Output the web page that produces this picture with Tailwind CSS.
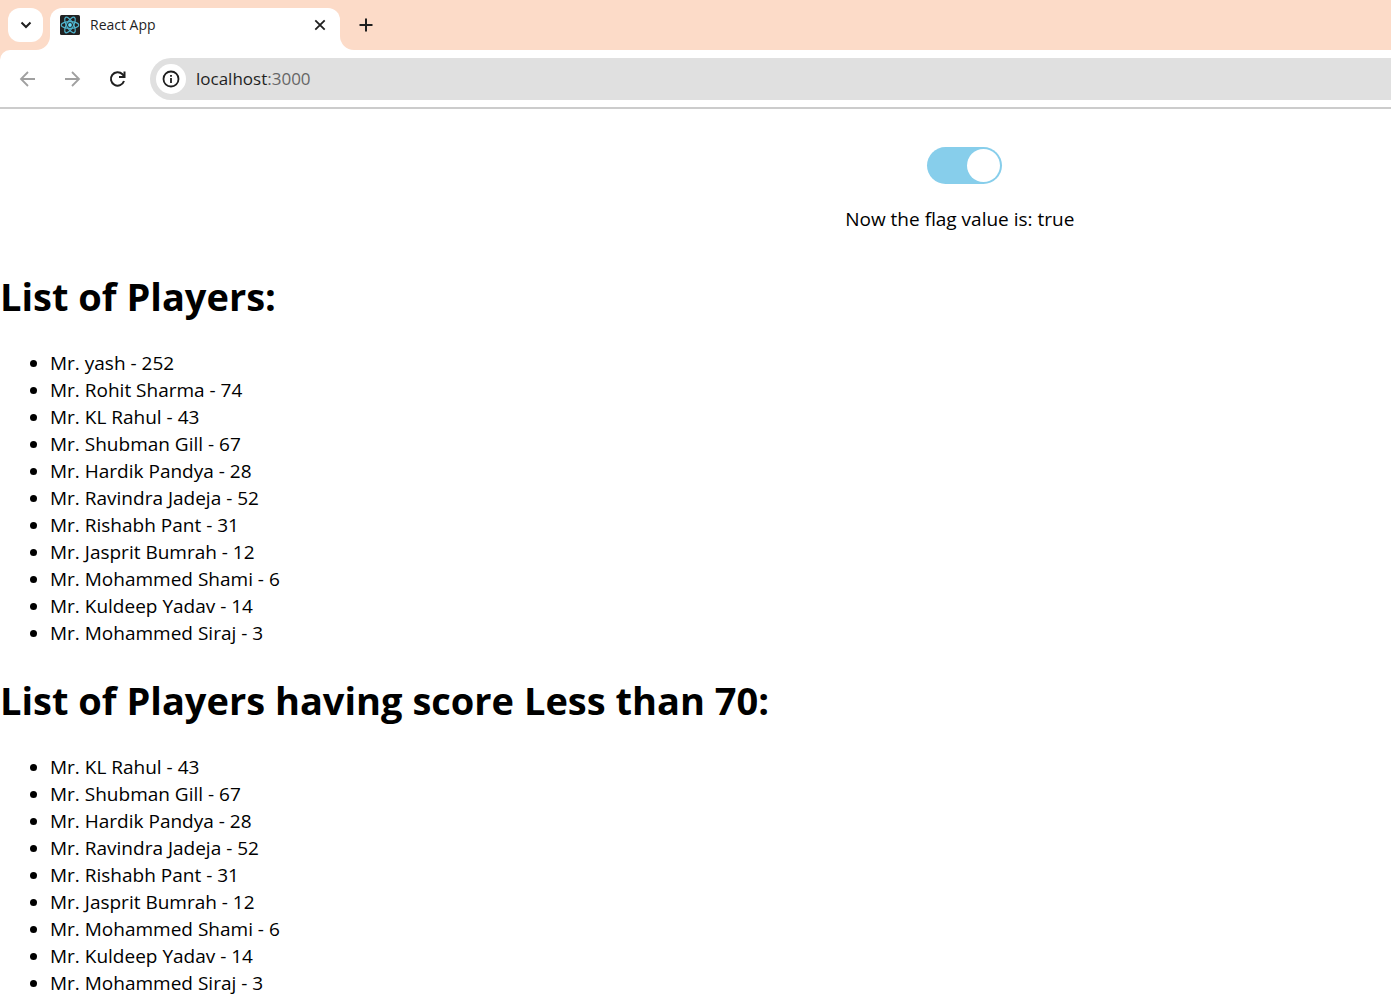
<!DOCTYPE html>
<html lang="en">
<head>
<meta charset="utf-8">
<meta name="viewport" content="width=device-width, initial-scale=1">
<title>React App</title>
<script src="https://cdn.jsdelivr.net/npm/@tailwindcss/browser@4"></script>
</head>
<body class="bg-white text-black font-['Open_Sans','Noto_Sans',sans-serif]">
<header class="border-b-2 border-[#cccccc]">
  <!-- Tab strip -->
  <div class="flex h-[50px] bg-white">
    <div class="w-[50px] shrink-0 rounded-br-[14px] bg-[#fcdbc8] pt-2 pl-2">
      <button type="button" aria-label="Search tabs" class="flex h-[34px] w-[35px] items-center justify-center rounded-xl bg-white">
        <svg class="size-4" viewBox="0 0 16 16" fill="none" stroke="#1f1f1f" stroke-width="2"><path d="M3.500 5.500 8 10l4.500-4.500"/></svg>
      </button>
    </div>
    <div class="w-[290px] shrink-0 bg-[#fcdbc8] pt-2">
      <div class="flex h-[42px] items-center rounded-t-xl bg-white px-[10px] pb-2">
        <svg class="size-5" viewBox="0 0 20 20" fill="none">
          <rect width="20" height="20" rx="1.500" fill="#222222"/>
          <g stroke="#4fb3cc" stroke-width="1.200"><ellipse cx="10" cy="10" rx="8.800" ry="3.400"/><ellipse cx="10" cy="10" rx="8.800" ry="3.400" transform="rotate(60 10 10)"/><ellipse cx="10" cy="10" rx="8.800" ry="3.400" transform="rotate(120 10 10)"/></g>
          <circle cx="10" cy="10" r="1.900" fill="#61dafb"/>
        </svg>
        <span class="ml-[10px] grow text-sm leading-5 text-[#1f1f1f]">React App</span>
        <button type="button" aria-label="Close tab" class="flex size-5 items-center justify-center">
          <svg class="size-5" viewBox="0 0 20 20" fill="none" stroke="#1f1f1f" stroke-width="1.800"><path d="m5.300 5.300 9.400 9.400m0-9.400-9.400 9.400"/></svg>
        </button>
      </div>
    </div>
    <div class="grow rounded-bl-[14px] bg-[#fcdbc8] pt-[15px] pl-4">
      <button type="button" aria-label="New tab" class="flex size-5 items-center justify-center">
        <svg class="size-5" viewBox="0 0 20 20" fill="none" stroke="#1f1f1f" stroke-width="2"><path d="M10 3.500v13M3.500 10h13"/></svg>
      </button>
    </div>
  </div>
  <!-- Toolbar -->
  <div class="bg-[#fcdbc8]">
    <div class="flex h-[57px] items-center rounded-tl-[10px] bg-white pl-[18px]">
      <button type="button" aria-label="Back" class="mr-[25px] size-5">
        <svg class="size-5" viewBox="0 0 20 20" fill="none" stroke="#a0a0a0" stroke-width="1.800"><path d="M17 10H3.500M10 3l-7 7 7 7"/></svg>
      </button>
      <button type="button" aria-label="Forward" class="mr-[25px] size-5">
        <svg class="size-5" viewBox="0 0 20 20" fill="none" stroke="#a0a0a0" stroke-width="1.800"><path d="M2 10h13.500M9 3l7 7-7 7"/></svg>
      </button>
      <button type="button" aria-label="Reload" class="mr-[22px] size-5">
        <svg class="size-5" viewBox="0 0 20 20" fill="none" stroke="#1f1f1f" stroke-width="2"><path d="M16 12A6.700 6.700 0 1 1 14.500 5.300l1.600 1.800"/><path d="M16.500 2.500V8H11"/></svg>
      </button>
      <div class="flex h-[42px] grow items-center rounded-l-full bg-[#e0e0e0] pl-[6px]">
        <button type="button" aria-label="View site information" class="flex size-[30px] items-center justify-center rounded-full bg-white">
          <svg class="size-[18px]" viewBox="0 0 18 18" fill="none" stroke="#1f1f1f" stroke-width="1.800"><circle cx="9" cy="9" r="7.500"/><path d="M9 8v5M9 5v1.800"/></svg>
        </button>
        <a href="http://localhost:3000" class="ml-[10px] text-[17px] leading-6 text-[#1f1f1f]">localhost<span class="text-[#666666]">:3000</span></a>
      </div>
    </div>
  </div>
</header>
<main class="text-[19px] leading-[27px]">
  <div class="ml-[38%] flex flex-col items-center pt-[38px]">
    <label class="ml-[10px] flex cursor-pointer">
      <input type="checkbox" role="switch" aria-label="Flag" checked class="peer sr-only">
      <span class="flex h-[37px] w-[75px] items-center rounded-full bg-[#cccccc] px-[2px] peer-checked:justify-end peer-checked:bg-[#87ceeb]"><span class="size-[33px] rounded-full bg-white"></span></span>
    </label>
    <p class="mt-[22px]">Now the flag value is: true</p>
  </div>
  <section>
    <h1 class="mt-9 mb-[26px] text-[38px] leading-[55px] font-bold">List of Players:</h1>
    <ul class="list-disc pl-[50px]">
      <li>Mr. yash - 252</li>
      <li>Mr. Rohit Sharma - 74</li>
      <li>Mr. KL Rahul - 43</li>
      <li>Mr. Shubman Gill - 67</li>
      <li>Mr. Hardik Pandya - 28</li>
      <li>Mr. Ravindra Jadeja - 52</li>
      <li>Mr. Rishabh Pant - 31</li>
      <li>Mr. Jasprit Bumrah - 12</li>
      <li>Mr. Mohammed Shami - 6</li>
      <li>Mr. Kuldeep Yadav - 14</li>
      <li>Mr. Mohammed Siraj - 3</li>
    </ul>
  </section>
  <section>
    <h1 class="my-[26px] text-[38px] leading-[55px] font-bold">List of Players having score Less than 70:</h1>
    <ul class="list-disc pl-[50px]">
      <li>Mr. KL Rahul - 43</li>
      <li>Mr. Shubman Gill - 67</li>
      <li>Mr. Hardik Pandya - 28</li>
      <li>Mr. Ravindra Jadeja - 52</li>
      <li>Mr. Rishabh Pant - 31</li>
      <li>Mr. Jasprit Bumrah - 12</li>
      <li>Mr. Mohammed Shami - 6</li>
      <li>Mr. Kuldeep Yadav - 14</li>
      <li>Mr. Mohammed Siraj - 3</li>
    </ul>
  </section>
</main>
</body>
</html>
